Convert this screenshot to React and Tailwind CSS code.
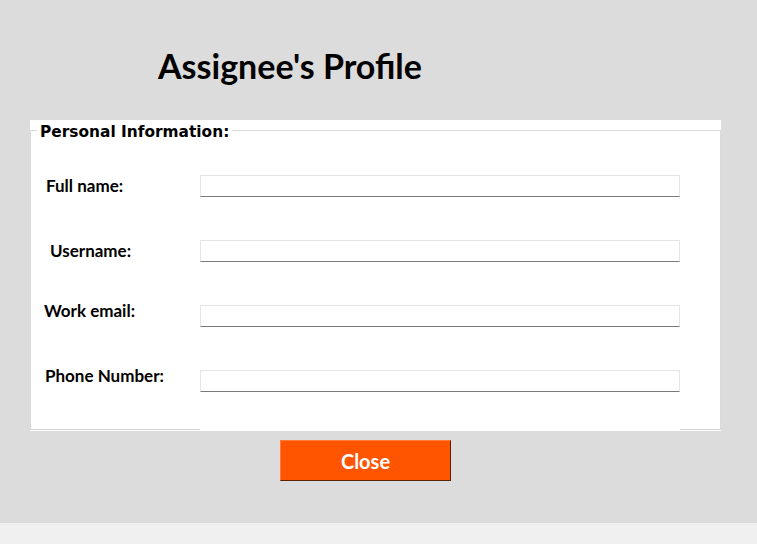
const rows = [
  { label: "Full name:", cls: "ml-[15px]" },
  { label: "Username:", cls: "ml-[19px]" },
  { label: "Work email:", cls: "ml-[13px] -mt-[10px]" },
  { label: "Phone Number:", cls: "ml-[14px] -mt-[10px]" },
]

export default function App() {
  return (
    <div className="flex h-[544px] w-[757px] flex-col bg-[#f0f0f0] font-['Lato',sans-serif]">
      <div className="h-[523px] bg-[#dcdcdc]">
        <h1 className="h-[120px] pl-[158px] pt-[46px] text-[34px] font-bold leading-[40px] text-black">
          Assignee's Profile
        </h1>

        <div className="ml-[30px] w-[691px] bg-white pb-[1px]">
          <fieldset className="border border-b-0 border-[#dadada] pt-[34px]">
            <legend className="ml-[6px] px-[3px] font-['DejaVu_Sans',sans-serif] text-[15.4px] font-bold leading-[21px] text-black">
              <span className="relative top-[2px]">Personal Information:</span>
            </legend>
            <div className="flex flex-col gap-[43px] pb-[37px]">
              {rows.map((r) => (
                <div key={r.label} className="flex h-[22px] items-center">
                  <div className="w-[169px] shrink-0">
                    <span className={`block text-[17px] font-bold leading-[20px] text-black ${r.cls}`}>
                      {r.label}
                    </span>
                  </div>
                  <input
                    type="text"
                    className="h-[22px] w-[480px] border border-[#e6e6e6] border-b-[#7a7a7a] bg-white outline-none"
                  />
                </div>
              ))}
            </div>
          </fieldset>
          {/* bottom edge, hidden under the field column */}
          <div className="flex h-[1px]">
            <div className="w-[170px] bg-[#d4d4d4]" />
            <div className="w-[480px]" />
            <div className="flex-1 bg-[#d4d4d4]" />
          </div>
        </div>

        <button className="ml-[280px] mt-[9px] flex h-[41px] w-[171px] items-center justify-center border border-[#ff7a3a] border-b-[#5a2200] border-r-[#5a2200] bg-[#ff5500] text-[20px] font-bold text-white">
          Close
        </button>
      </div>
    </div>
  )
}
